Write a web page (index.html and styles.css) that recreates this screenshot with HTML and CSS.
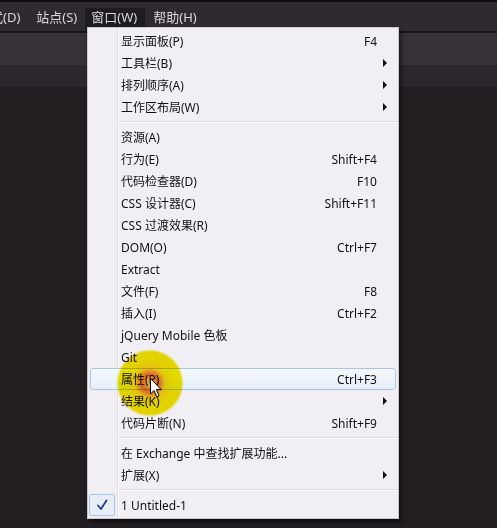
FILE: index.html
```html
<!DOCTYPE html>
<html lang="zh-CN">
<head>
    <meta charset="UTF-8">
    <meta name="viewport" content="width=device-width, initial-scale=1.0">
    <title>窗口菜单</title>
    <link rel="stylesheet" href="styles.css">
</head>
<body>
    <div class="app">
        <div class="menubar">
            <div class="menubar-item first">格式(D)</div>
            <div class="menubar-item">站点(S)</div>
            <div class="menubar-item active">窗口(W)</div>
            <div class="menubar-item">帮助(H)</div>
        </div>
        <div class="toolbar"></div>
        <div class="tabstrip"></div>
        <div class="editor"></div>
    </div>

    <div class="dropdown">
        <div class="row"><span class="gutter"></span><span class="label">显示面板(P)</span><span class="key">F4</span><span class="arrow"></span></div>
        <div class="row sub"><span class="gutter"></span><span class="label">工具栏(B)</span><span class="key"></span><span class="arrow"></span></div>
        <div class="row sub"><span class="gutter"></span><span class="label">排列顺序(A)</span><span class="key"></span><span class="arrow"></span></div>
        <div class="row sub"><span class="gutter"></span><span class="label">工作区布局(W)</span><span class="key"></span><span class="arrow"></span></div>
        <div class="separator"></div>
        <div class="row"><span class="gutter"></span><span class="label">资源(A)</span><span class="key"></span><span class="arrow"></span></div>
        <div class="row"><span class="gutter"></span><span class="label">行为(E)</span><span class="key">Shift+F4</span><span class="arrow"></span></div>
        <div class="row"><span class="gutter"></span><span class="label">代码检查器(D)</span><span class="key">F10</span><span class="arrow"></span></div>
        <div class="row"><span class="gutter"></span><span class="label">CSS 设计器(C)</span><span class="key">Shift+F11</span><span class="arrow"></span></div>
        <div class="row"><span class="gutter"></span><span class="label">CSS 过渡效果(R)</span><span class="key"></span><span class="arrow"></span></div>
        <div class="row"><span class="gutter"></span><span class="label">DOM(O)</span><span class="key">Ctrl+F7</span><span class="arrow"></span></div>
        <div class="row"><span class="gutter"></span><span class="label">Extract</span><span class="key"></span><span class="arrow"></span></div>
        <div class="row"><span class="gutter"></span><span class="label">文件(F)</span><span class="key">F8</span><span class="arrow"></span></div>
        <div class="row"><span class="gutter"></span><span class="label">插入(I)</span><span class="key">Ctrl+F2</span><span class="arrow"></span></div>
        <div class="row"><span class="gutter"></span><span class="label">jQuery Mobile 色板</span><span class="key"></span><span class="arrow"></span></div>
        <div class="row"><span class="gutter"></span><span class="label">Git</span><span class="key"></span><span class="arrow"></span></div>
        <div class="row hover"><span class="gutter"></span><span class="label">属性(P)</span><span class="key">Ctrl+F3</span><span class="arrow"></span></div>
        <div class="row sub"><span class="gutter"></span><span class="label">结果(K)</span><span class="key"></span><span class="arrow"></span></div>
        <div class="row"><span class="gutter"></span><span class="label">代码片断(N)</span><span class="key">Shift+F9</span><span class="arrow"></span></div>
        <div class="separator"></div>
        <div class="row"><span class="gutter"></span><span class="label">在 Exchange 中查找扩展功能...</span><span class="key"></span><span class="arrow"></span></div>
        <div class="row sub"><span class="gutter"></span><span class="label">扩展(X)</span><span class="key"></span><span class="arrow"></span></div>
        <div class="separator"></div>
        <div class="row">
            <span class="gutter">
                <span class="check">
                    <svg width="12" height="12" viewBox="0 0 12 12" fill="none" stroke="#1d3f8f" stroke-width="1.8" stroke-linecap="round" stroke-linejoin="round"><polyline points="2 6.5 5 10 10.5 1.5"/></svg>
                </span>
            </span>
            <span class="label">1 Untitled-1</span><span class="key"></span><span class="arrow"></span>
        </div>
    </div>

    <!-- click highlight + pointer from the screen recording -->
    <div class="click-spot"></div>
    <svg class="pointer" width="13" height="20" viewBox="0 0 13 20"><path d="M0.5 0.5 L0.5 16 L4 12.5 L6.8 18.8 L9 17.8 L6.3 11.6 L11.2 11.6 Z" fill="#fff" stroke="#000" stroke-width="1" stroke-linejoin="round"/></svg>
</body>
</html>
```

FILE: styles.css
```css
html, body {
    margin: 0;
    padding: 0;
}

body {
    width: 497px;
    height: 528px;
    overflow: hidden;
    background: #221e22;
    font-family: "Noto Sans", "Noto Sans CJK SC", sans-serif;
    position: relative;
}

.app {
    display: flex;
    flex-direction: column;
    height: 100%;
}

.menubar {
    height: 29px;
    border-top: 2px solid #100e11;
    border-bottom: 2px solid #19161a;
    background: #2e2a2f;
    display: flex;
    align-items: flex-end;
    overflow: hidden;
}

.menubar-item {
    height: 23px;
    line-height: 19px;
    padding: 0 8px;
    color: #d9d6da;
    font-size: 13px;
    white-space: nowrap;
}

.menubar-item.first {
    margin-left: -31px;
}

.menubar-item.active {
    background: #1f1c20;
    padding: 0 8px 0 6px;
    width: 46px;
}

.toolbar {
    height: 32px;
    background: #363237;
    border-bottom: 1px solid #2a262b;
}

.tabstrip {
    height: 21px;
    background: #2b272c;
}

.editor {
    flex: 1;
    background: #221e22;
}

.dropdown {
    position: absolute;
    left: 87px;
    top: 27px;
    width: 310px;
    padding: 2px 0;
    border: 1px solid #c9c7cd;
    background-color: #f1eff3;
    background-image: linear-gradient(to right, transparent 29px, #e0dee4 29px, #e0dee4 30px, #fbfafc 30px, #fbfafc 31px, transparent 31px);
    box-shadow: 2px 3px 4px rgba(0, 0, 0, 0.55);
    display: flex;
    flex-direction: column;
    font-size: 12px;
    color: #111;
}

.dropdown .row {
    height: 22px;
    display: grid;
    grid-template-columns: 33px 1fr auto 16px;
    align-items: center;
    padding-right: 5px;
    white-space: nowrap;
}

.dropdown .row.hover {
    margin: 0 2px;
    height: 20px;
    border: 1px solid #a9c6e6;
    border-radius: 3px;
    background: linear-gradient(#f5f8fc, #e6eef8);
    grid-template-columns: 30px 1fr auto 16px;
    padding-right: 2px;
}

.dropdown .gutter {
    height: 22px;
    display: flex;
    align-items: center;
}

.dropdown .row.hover .gutter {
    height: 20px;
}

.dropdown .key {
    text-align: right;
}

.dropdown .row.sub .arrow {
    justify-self: center;
    width: 0;
    height: 0;
    border-top: 4px solid transparent;
    border-bottom: 4px solid transparent;
    border-left: 4px solid #111;
}

.dropdown .separator {
    height: 8px;
    margin-left: 31px;
    background: linear-gradient(transparent 3px, #dcdae0 3px, #dcdae0 4px, #fbfafc 4px, #fbfafc 5px, transparent 5px);
}

.dropdown .check {
    margin-left: 1px;
    width: 24px;
    height: 20px;
    border: 1px solid #a9c6e6;
    border-radius: 2px;
    background: #e7eef8;
    display: flex;
    justify-content: center;
    align-items: center;
}

.click-spot {
    position: absolute;
    left: 116px;
    top: 349px;
    width: 68px;
    height: 68px;
    border-radius: 50%;
    mix-blend-mode: multiply;
    background: radial-gradient(circle, #f6c44a 0, #f3a53a 4px, #e86a22 8px, #ec8a26 11px, #f3cd10 15px, #f0e200 24px, #f0e200 31px, rgba(240, 226, 0, 0) 34px);
}

.pointer {
    position: absolute;
    left: 150px;
    top: 378px;
}
```
